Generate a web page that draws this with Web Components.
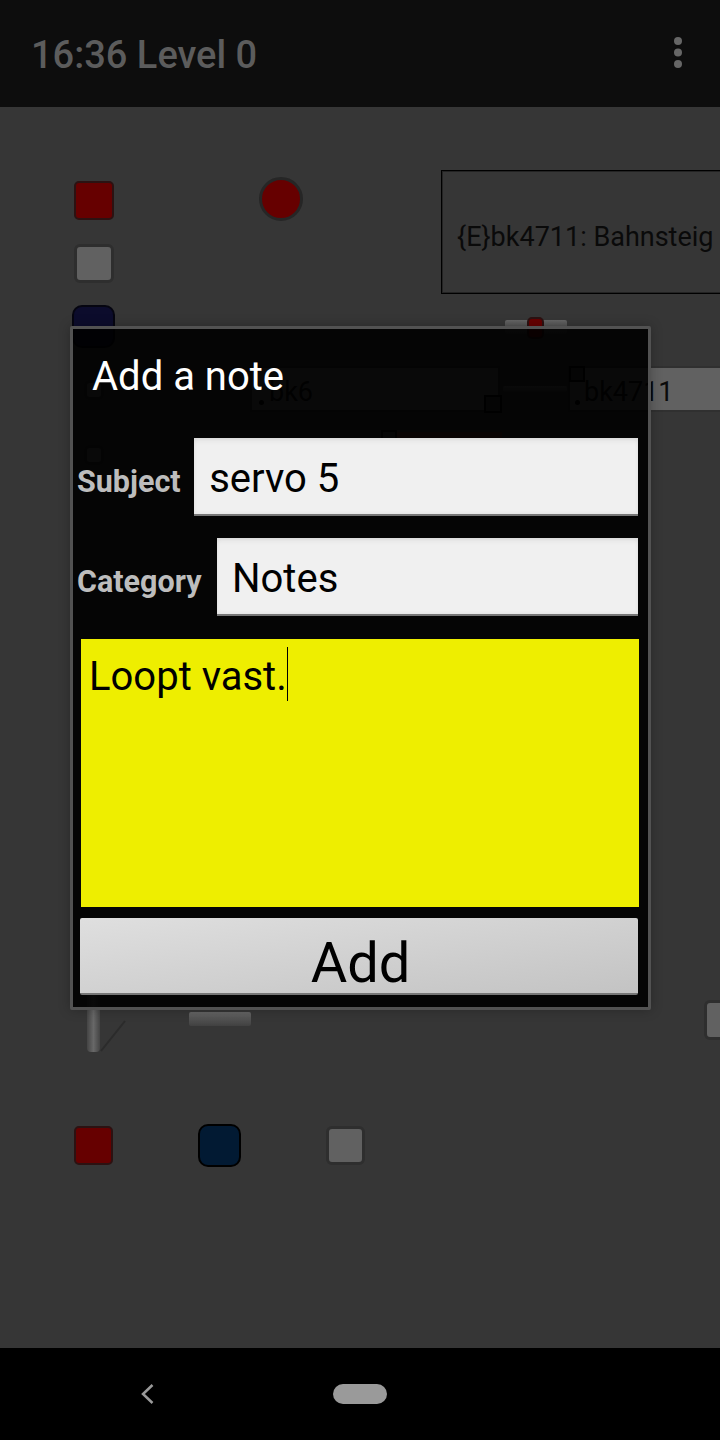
<!DOCTYPE html>
<html>
<head>
<meta charset="utf-8">
<title>Add a note</title>
<style>
  html, body { margin: 0; padding: 0; background: #000; }
  body { width: 720px; height: 1440px; display: flex; flex-direction: column; font-family: Roboto, "Liberation Sans", sans-serif; overflow: hidden; }
</style>
</head>
<body>
<app-bar>16:36 Level 0</app-bar>
<track-panel>
  <!-- layout items sit on a free canvas, so they carry their own coordinates -->
  <track-item kind="red" x="74" y="181" w="40" h="39"></track-item>
  <track-item kind="dot" x="259" y="177" w="44" h="44"></track-item>
  <track-item kind="grey" x="74" y="244" w="40" h="39"></track-item>
  <track-item kind="navy" x="72" y="305" w="43" h="43"></track-item>
  <track-item kind="outline" x="441" y="170" w="290" h="124">{E}bk4711: Bahnsteig</track-item>
  <track-item kind="bar" x="505" y="320" w="62" h="14"></track-item>
  <track-item kind="red" x="527" y="317" w="17" h="22"></track-item>
  <track-item kind="block" x="250" y="366" w="250" h="46" style="padding-left:17px">bk6</track-item>
  <track-item kind="block" x="568" y="366" w="170" h="46">bk4711</track-item>
  <track-item kind="pin" x="259" y="400" w="5" h="5"></track-item>
  <track-item kind="pin" x="575" y="400" w="5" h="5"></track-item>
  <track-item kind="port" x="484" y="395" w="18" h="18"></track-item>
  <track-item kind="port" x="569" y="366" w="16" h="16"></track-item>
  <track-item kind="port" x="381" y="430" w="16" h="16"></track-item>
  <track-item kind="bar" x="503" y="386" w="64" h="6"></track-item>
  <track-item kind="rust" x="397" y="432" w="105" h="6"></track-item>
  <track-item kind="grey" x="84" y="445" w="20" h="20"></track-item>
  <track-item kind="grey" x="84" y="380" w="20" h="20"></track-item>
  <track-item kind="vrail" x="87" y="980" w="13" h="72"></track-item>
  <track-item kind="diag" x="100" y="1018" w="26" h="34"></track-item>
  <track-item kind="bar" x="189" y="1012" w="62" h="14"></track-item>
  <track-item kind="grey" x="704" y="1000" w="30" h="40"></track-item>
  <track-item kind="red" x="74" y="1126" w="39" h="39"></track-item>
  <track-item kind="navy2" x="198" y="1124" w="43" h="43"></track-item>
  <track-item kind="grey" x="326" y="1126" w="39" h="39"></track-item>
  <note-dialog heading="Add a note">
    <note-field label="Subject">servo 5</note-field>
    <note-field label="Category" style="--gap:15px">Notes</note-field>
    <note-body>Loopt vast.</note-body>
    <note-button>Add</note-button>
  </note-dialog>
</track-panel>
<nav-bar></nav-bar>

<script>
class AppBar extends HTMLElement {
  constructor() {
    super();
    this.attachShadow({ mode: "open" }).innerHTML = `
      <style>
        :host { display: flex; align-items: center; justify-content: space-between; flex: 0 0 107px; height: 107px; box-sizing: border-box; padding: 2px 36px 0 31px; background: #0d0d0d; color: #5c5c5c; font: 500 38px Roboto, sans-serif; }
        svg { width: 12px; height: 32px; margin-top: -3px; }
      </style>
      <span><slot></slot></span>
      <svg viewBox="0 0 12 32"><g fill="#666"><circle cx="6" cy="4" r="4"/><circle cx="6" cy="15.500" r="4"/><circle cx="6" cy="27" r="4"/></g></svg>
    `;
  }
}

class TrackPanel extends HTMLElement {
  constructor() {
    super();
    this.attachShadow({ mode: "open" }).innerHTML = `
      <style>
        :host { display: block; position: relative; flex: 1; background: #363636; overflow: hidden; }
      </style>
      <slot></slot>
    `;
  }
}

class TrackItem extends HTMLElement {
  constructor() {
    super();
    this.attachShadow({ mode: "open" }).innerHTML = `
      <style>
        :host { display: flex; align-items: center; position: absolute; box-sizing: border-box; color: #0a0a0a; font: 400 27px Roboto, sans-serif; white-space: nowrap; overflow: hidden; }
        :host([kind=red]) { background: #660000; border: 2px solid #2c1212; border-radius: 5px; }
        :host([kind=grey]) { background: #616161; border: 3px solid #2e2e2e; border-radius: 6px; }
        :host([kind=navy]) { background: #0c0c2c; border: 2px solid #050510; border-radius: 10px; }
        :host([kind=navy2]) { background: #021a33; border: 2px solid #000; border-radius: 10px; }
        :host([kind=dot]) { background: #660000; border: 3px solid #262626; border-radius: 50%; }
        :host([kind=outline]) { border: 1px solid #000; box-shadow: inset 0 0 0 1px rgba(0, 0, 0, .35); padding: 10px 0 0 15px; }
        :host([kind=bar]) { background: linear-gradient(#666, #525252 50%, #414141); border-radius: 2px; }
        :host([kind=rust]) { background: #5a3020; }
        :host([kind=pin]) { background: #000; border-radius: 50%; }
        :host([kind=vrail]) { background: linear-gradient(90deg, #444, #686868 50%, #444); border-radius: 0 0 4px 4px; }
        :host([kind=block]) { background: #616161; border: 2px solid #303030; padding: 6px 0 0 14px; }
        :host([kind=port]) { background: #363636; border: 2px solid #000; }
        svg { width: 100%; height: 100%; display: block; }
      </style>
      <slot></slot>
    `;
  }
  connectedCallback() {
    // place from the attributes, panel starts 107px down the page
    this.style.left = this.getAttribute("x") + "px";
    this.style.top = (this.getAttribute("y") - 107) + "px";
    this.style.width = this.getAttribute("w") + "px";
    this.style.height = this.getAttribute("h") + "px";
    if (this.getAttribute("kind") === "diag") {
      this.shadowRoot.innerHTML += `<svg viewBox="0 0 26 34"><path d="M1 33L25 3" stroke="#2b2b2b" stroke-width="2" fill="none"/></svg>`;
    }
  }
}

class NoteDialog extends HTMLElement {
  constructor() {
    super();
    this.attachShadow({ mode: "open" }).innerHTML = `
      <style>
        :host { display: flex; flex-direction: column; position: absolute; left: 70px; top: 219px; width: 581px; height: 684px; box-sizing: border-box; padding: 0 10px 12px 4px; background: rgba(0, 0, 0, .9); border: 3px solid #525252; border-radius: 2px; box-shadow: 0 0 12px rgba(0, 0, 0, .25); }
        h2 { margin: 0; padding: 24px 0 0 15px; height: 109px; box-sizing: border-box; color: #fff; font: 400 40px/48px Roboto, sans-serif; }
      </style>
      <h2></h2>
      <slot></slot>
    `;
  }
  connectedCallback() {
    this.shadowRoot.querySelector("h2").textContent = this.getAttribute("heading");
  }
}

class NoteField extends HTMLElement {
  constructor() {
    super();
    this.attachShadow({ mode: "open" }).innerHTML = `
      <style>
        :host { display: flex; align-items: center; gap: var(--gap, 13px); height: 78px; margin-bottom: 22px; }
        label { color: #bdbdbd; font: 700 30.500px Roboto, sans-serif; padding-top: 9px; }
        div { flex: 1; height: 100%; box-sizing: border-box; display: flex; align-items: center; padding: 4px 0 0 15.500px; color: #000; font: 400 40px Roboto, sans-serif; background: #f0f0f0; border-bottom: 2px solid #777; box-shadow: inset 0 6px 6px -4px rgba(0, 0, 0, .07), inset 0 0 4px rgba(0, 0, 0, .07); }
      </style>
      <label></label>
      <div><slot></slot></div>
    `;
  }
  connectedCallback() {
    this.shadowRoot.querySelector("label").textContent = this.getAttribute("label");
  }
}

class NoteBody extends HTMLElement {
  constructor() {
    super();
    this.attachShadow({ mode: "open" }).innerHTML = `
      <style>
        :host { display: block; height: 268px; margin: 1px -1px 11px 4px; box-sizing: border-box; padding: 8px 8px; background: #eeee00; color: #000; font: 400 40px/60px Roboto, sans-serif; }
        span { border-right: 1px solid #000; display: inline-block; height: 54px; }
      </style>
      <span><slot></slot></span>
    `;
  }
}

class NoteButton extends HTMLElement {
  constructor() {
    super();
    this.attachShadow({ mode: "open" }).innerHTML = `
      <style>
        :host { display: flex; align-items: center; justify-content: center; height: 77px; margin-left: 3px; box-sizing: border-box; padding: 14px 0 0 3px; color: #000; font: 400 56px Roboto, sans-serif; background: linear-gradient(172deg, #dfdfdf, #c3c3c3); border-bottom: 2px solid #777; border-radius: 2px; overflow: hidden; }
      </style>
      <slot></slot>
    `;
  }
}

class NavBar extends HTMLElement {
  constructor() {
    super();
    this.attachShadow({ mode: "open" }).innerHTML = `
      <style>
        :host { display: block; position: relative; flex: 0 0 92px; height: 92px; background: #000; }
        svg { position: absolute; left: 140px; top: 35px; width: 14px; height: 22px; }
        i { position: absolute; left: 333px; top: 36px; width: 54px; height: 20px; border-radius: 10px; background: #9a9a9a; }
      </style>
      <svg viewBox="0 0 14 22"><path d="M12.500 2L3 11L12.500 20" fill="none" stroke="#9a9a9a" stroke-width="2.500"/></svg>
      <i></i>
    `;
  }
}

customElements.define("app-bar", AppBar);
customElements.define("track-panel", TrackPanel);
customElements.define("track-item", TrackItem);
customElements.define("note-dialog", NoteDialog);
customElements.define("note-field", NoteField);
customElements.define("note-body", NoteBody);
customElements.define("note-button", NoteButton);
customElements.define("nav-bar", NavBar);
</script>
</body>
</html>
